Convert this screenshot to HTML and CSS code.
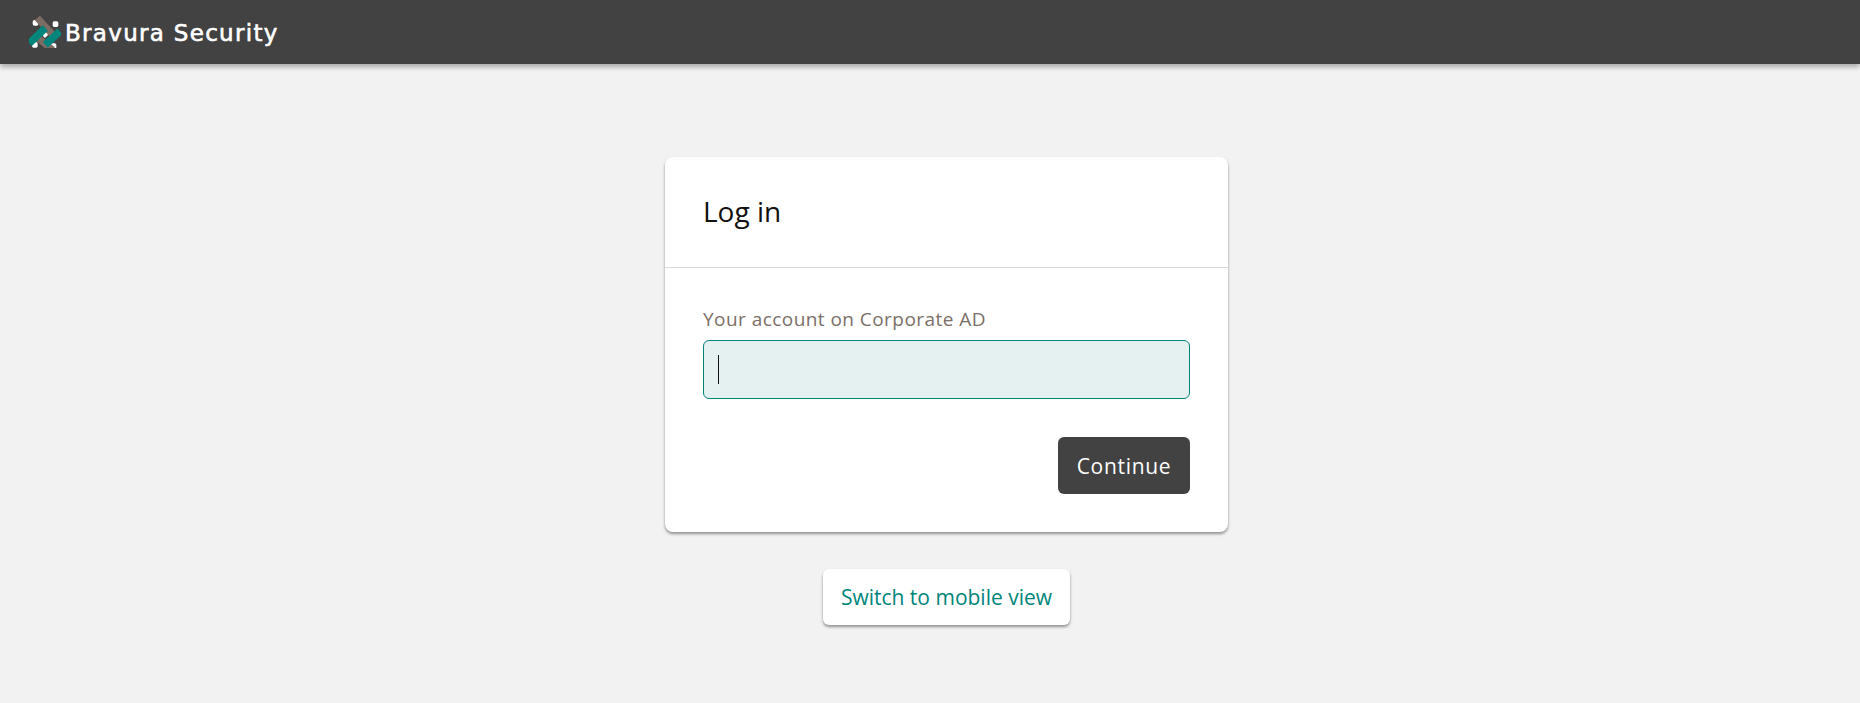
FILE: index.html
```html
<!DOCTYPE html>
<html lang="en">
<head>
<meta charset="UTF-8">
<title>Log in</title>
<link rel="stylesheet" href="styles.css">
</head>
<body>
<header class="topbar">
  <a class="brand" href="#">
    <svg class="brand-logo" viewBox="27 18 96 96" width="32" height="32" aria-hidden="true">
      <rect x="38" y="30" width="17" height="17" rx="5" fill="#fff"/>
      <rect x="98" y="34" width="17" height="17" rx="5" fill="#fff"/>
      <rect x="36" y="96" width="17" height="17" rx="5" fill="#fff"/>
      <rect x="92" y="100" width="17" height="17" rx="5" fill="#fff"/>
      <rect x="65" y="60" width="20" height="20" transform="rotate(45 75 70)" fill="#fff"/>
      <path d="M52 82 L98 120" stroke="#7d6c64" stroke-width="21" fill="none"/>
      <path d="M52 24 L100 76" stroke="#7d6c64" stroke-width="21" fill="none"/>
      <path d="M28 100 L76 54" stroke="#00857c" stroke-width="22" fill="none"/>
      <path d="M76 104 L120 64" stroke="#00857c" stroke-width="22" fill="none"/>
    </svg>
    <span class="brand-name">Bravura Security</span>
  </a>
</header>
<main class="page">
  <form class="card">
    <h1 class="card-title">Log in</h1>
    <div class="card-body">
      <label class="field-label" for="account">Your account on Corporate AD</label>
      <div class="field-input" id="account"><span class="caret"></span></div>
      <div class="actions">
        <button class="btn-primary" type="button">Continue</button>
      </div>
    </div>
  </form>
  <button class="btn-switch" type="button">Switch to mobile view</button>
</main>
</body>
</html>
```
FILE: styles.css
```css
* {
  box-sizing: border-box;
}
html, body {
  height: 100%;
}
body {
  margin: 0;
  background-color: #f2f2f2;
  font-family: "Open Sans", sans-serif;
  overflow: hidden;
}

.topbar {
  display: flex;
  align-items: center;
  height: 64px;
  padding: 0 0 0 29px;
  background-color: #424242;
  box-shadow: 0 3px 5px rgba(0, 0, 0, 0.3);
}
.brand {
  display: flex;
  align-items: center;
  gap: 4px;
  color: #fff;
  text-decoration: none;
}
.brand-name {
  padding-top: 2px;
  font-family: "DejaVu Sans", sans-serif;
  font-size: 23px;
  letter-spacing: 1.3px;
  -webkit-text-stroke: 0.6px #fff;
}

.page {
  display: flex;
  flex-direction: column;
  align-items: center;
  padding: 93px 0 0 33px;
}

.card {
  width: 563px;
  height: 375px;
  background-color: #fff;
  border-radius: 8px;
  box-shadow: 0 2px 3px rgba(0, 0, 0, 0.4);
}
.card-title {
  height: 111px;
  margin: 0;
  padding: 35px 38px 0 38px;
  border-bottom: 1px solid #d8d8d8;
  color: #111;
  font-size: 28px;
  font-weight: 400;
  line-height: 38px;
}
.card-body {
  padding: 38px 38px 0 38px;
}
.field-label {
  display: block;
  color: #7b6f68;
  font-size: 19px;
  letter-spacing: 0.45px;
  line-height: 26px;
}
.field-input {
  display: flex;
  align-items: center;
  height: 59px;
  margin-top: 8px;
  padding: 0 14px;
  background-color: #e5f1f0;
  border: 1px solid #00857c;
  border-radius: 6px;
}
.caret {
  width: 1px;
  height: 29px;
  background-color: #111;
}
.actions {
  display: flex;
  justify-content: flex-end;
  margin-top: 38px;
}
.btn-primary {
  width: 132px;
  height: 57px;
  padding: 0;
  border: 0;
  border-radius: 6px;
  background-color: #424242;
  color: #fff;
  font-family: inherit;
  font-size: 21px;
  letter-spacing: 0.7px;
}
.btn-switch {
  width: 247px;
  height: 56px;
  margin-top: 37px;
  padding: 0;
  border: 0;
  border-radius: 6px;
  background-color: #fff;
  box-shadow: 0 2px 3px rgba(0, 0, 0, 0.4);
  color: #00857c;
  font-family: inherit;
  font-size: 21px;
}
```
